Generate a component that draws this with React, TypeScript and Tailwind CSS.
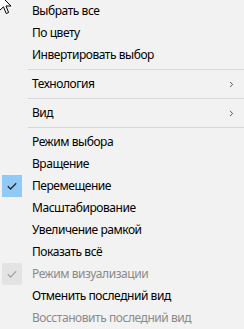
import { ChevronRight } from 'lucide-react'

type Item =
  | { kind: 'sep' }
  | { kind: 'item'; label: string; sub?: boolean; checked?: boolean; disabled?: boolean }

const items: Item[] = [
  { kind: 'item', label: 'Выбрать все' },
  { kind: 'item', label: 'По цвету' },
  { kind: 'item', label: 'Инвертировать выбор' },
  { kind: 'sep' },
  { kind: 'item', label: 'Технология', sub: true },
  { kind: 'sep' },
  { kind: 'item', label: 'Вид', sub: true },
  { kind: 'sep' },
  { kind: 'item', label: 'Режим выбора' },
  { kind: 'item', label: 'Вращение' },
  { kind: 'item', label: 'Перемещение', checked: true },
  { kind: 'item', label: 'Масштабирование' },
  { kind: 'item', label: 'Увеличение рамкой' },
  { kind: 'item', label: 'Показать всё' },
  { kind: 'item', label: 'Режим визуализации', checked: true, disabled: true },
  { kind: 'item', label: 'Отменить последний вид' },
  { kind: 'item', label: 'Восстановить последний вид', disabled: true },
]

const Check = ({ color }: { color: string }) => (
  <svg width="10" height="8" viewBox="0 0 10 8" fill="none">
    <path d="M0.8 4.2 L3.6 7 L9.2 1.2" stroke={color} strokeWidth="1.3" />
  </svg>
)

const App = () => {
  return (
    <div
      className="relative w-[244px] h-[329px] overflow-hidden bg-[#f2f2f2] text-[12px] text-black"
      style={{ fontFamily: '"Noto Sans", "Open Sans", sans-serif' }}
    >
      {/* mouse pointer, tip sits above the window */}
      <svg className="absolute left-[-1px] top-[-6px]" width="14" height="22" viewBox="0 0 14 22">
        <path d="M0.5 0.5 L0.5 16.5 L4.5 12.8 L7.2 19.5 L9.6 18.5 L7 12 L12 12 Z" fill="#fff" stroke="#000" strokeWidth="1" />
      </svg>

      {items.map((it, i) =>
        it.kind === 'sep' ? (
          <div key={i} className="h-[7px] flex items-center pl-[28px]">
            <div className="h-px w-full bg-[#d7d7d7]" />
          </div>
        ) : (
          <div key={i} className="h-[22px] flex items-center">
            <div className="w-[32px] h-full flex items-center pl-[2px]">
              {it.checked && (
                <div
                  className={`w-[20px] h-[22px] flex items-center justify-center ${
                    it.disabled ? 'bg-[#e3e3e3]' : 'bg-[#91c9f7]'
                  }`}
                >
                  <Check color={it.disabled ? '#a6a6a6' : '#2b2b2b'} />
                </div>
              )}
            </div>
            <span className={`flex-1 leading-none tracking-[-0.45px] ${it.disabled ? 'text-[#8a8a8a]' : ''}`}>
              {it.label}
            </span>
            {it.sub && <ChevronRight className="w-[9px] h-[9px] mr-[8px] text-[#333]" strokeWidth={2.2} />}
          </div>
        )
      )}
    </div>
  )
}

export default App
